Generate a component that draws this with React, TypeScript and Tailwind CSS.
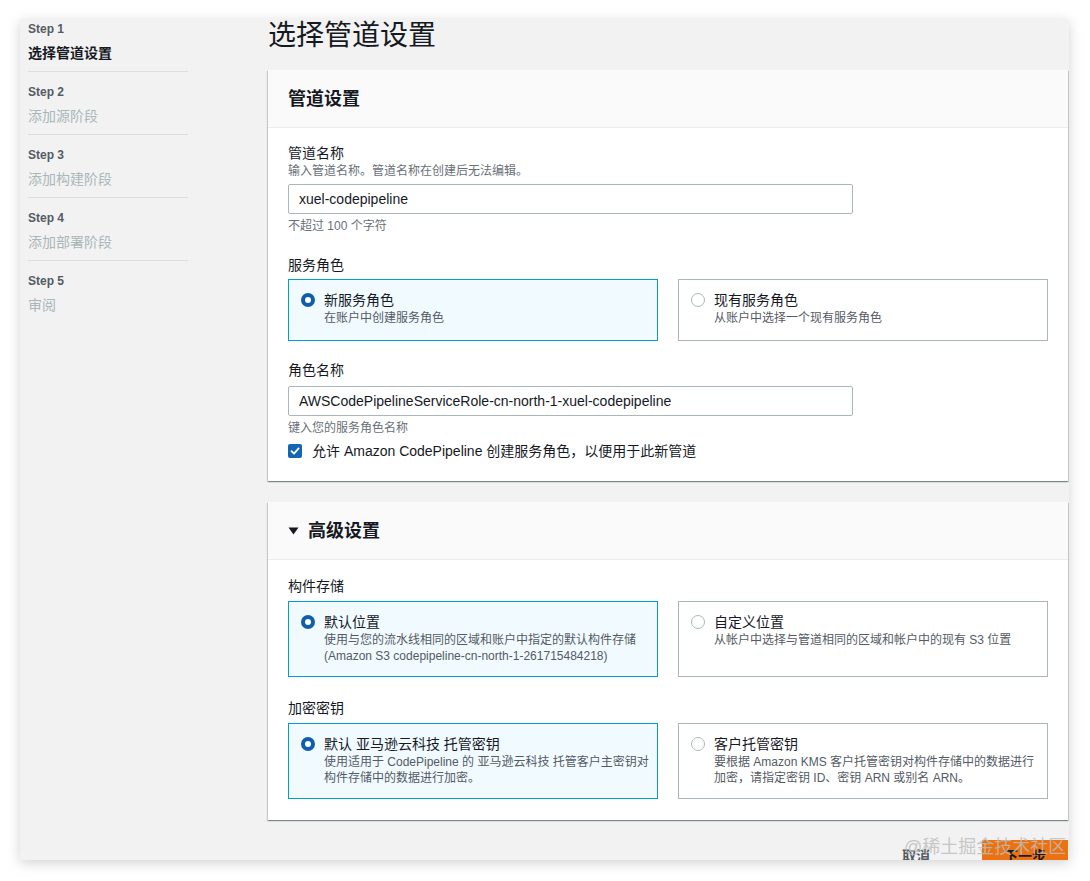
import React from "react";

const FONT = { fontFamily: '"Liberation Sans", "Noto Sans CJK SC", sans-serif' };

function Radio({ selected }: { selected: boolean }) {
  return selected ? (
    <div className="mt-[3px] w-[14px] h-[14px] shrink-0 rounded-full border-[4px] border-[#0f5ead] bg-white" />
  ) : (
    <div className="mt-[3px] w-[14px] h-[14px] shrink-0 rounded-full border border-[#aab7b8] bg-white" />
  );
}

function RadioCard({
  selected,
  title,
  lines,
}: {
  selected: boolean;
  title: string;
  lines: string[];
}) {
  const pad = lines.length > 1 ? "pb-[12px]" : "pb-[14px]";
  return (
    <div
      className={
        selected
          ? "flex px-[12px] pt-[10px] border border-[#00a1c9] bg-[#f1faff] " + pad
          : "flex px-[12px] pt-[10px] border border-[#aab7b8] bg-white " + pad
      }
    >
      <Radio selected={selected} />
      <div className="ml-[9px]">
        <div className="text-[14px] leading-[20px] text-[#16191f]">{title}</div>
        {lines.map((l, i) => (
          <div key={i} className="text-[12px] leading-[16px] text-[#545b64] whitespace-nowrap">
            {l}
          </div>
        ))}
      </div>
    </div>
  );
}

const steps = [
  { step: "Step 1", label: "选择管道设置", active: true },
  { step: "Step 2", label: "添加源阶段", active: false },
  { step: "Step 3", label: "添加构建阶段", active: false },
  { step: "Step 4", label: "添加部署阶段", active: false },
  { step: "Step 5", label: "审阅", active: false },
];

const cardShadow =
  "shadow-[0_1px_1px_0_rgba(0,28,36,0.3),1px_1px_1px_0_rgba(0,28,36,0.15),-1px_1px_1px_0_rgba(0,28,36,0.15)]";

export default function App() {
  return (
    <div className="relative min-h-[881px] bg-white pt-[19px] pl-[20px]" style={FONT}>
      <div className="w-[1049px] h-[841px] bg-[#f2f2f2] overflow-hidden flex shadow-[0_3px_12px_rgba(0,0,0,0.18)]">
        {/* Sidebar */}
        <div className="w-[248px] shrink-0 pl-[8px] pt-[2px]">
          <div className="w-[160px]">
            {steps.map((s, i) => (
              <div
                key={s.step}
                className={
                  (i < steps.length - 1 ? "border-b border-[#dcdede] pb-[8px] " : "") +
                  (i > 0 ? "pt-[12px]" : "")
                }
              >
                <div className="text-[12px] leading-[16px] font-bold text-[#545b64]">{s.step}</div>
                <div
                  className={
                    s.active
                      ? "mt-[6px] text-[14px] leading-[20px] font-bold text-[#16191f]"
                      : "mt-[6px] text-[14px] leading-[20px] text-[#aab7b8]"
                  }
                >
                  {s.label}
                </div>
              </div>
            ))}
          </div>
        </div>

        {/* Main */}
        <div className="flex-1 flex flex-col">
          <h1 className="text-[28px] leading-[34px] font-normal text-[#16191f]">选择管道设置</h1>

          {/* Card 1 */}
          <div className={"mt-[17px] w-[800px] bg-white shrink-0 " + cardShadow}>
            <div className="h-[58px] px-[20px] flex items-center bg-[#fafafa] border-b border-[#eaeded]">
              <h2 className="text-[18px] leading-[24px] font-bold text-[#16191f]">管道设置</h2>
            </div>
            <div className="pt-[15px] px-[20px] pb-[20px]">
              <div className="text-[14px] leading-[20px] text-[#16191f]">管道名称</div>
              <div className="text-[12px] leading-[16px] text-[#687078]">
                输入管道名称。管道名称在创建后无法编辑。
              </div>
              <div className="mt-[5px] w-[565px] h-[30px] border border-[#aab7b8] rounded-[2px] px-[10px] flex items-center text-[14px] text-[#16191f]">
                xuel-codepipeline
              </div>
              <div className="mt-[4px] text-[12px] leading-[16px] text-[#687078]">不超过 100 个字符</div>

              <div className="mt-[21px] text-[14px] leading-[20px] text-[#16191f]">服务角色</div>
              <div className="mt-[4px] grid grid-cols-[370px_370px] gap-[20px]">
                <RadioCard selected title="新服务角色" lines={["在账户中创建服务角色"]} />
                <RadioCard selected={false} title="现有服务角色" lines={["从账户中选择一个现有服务角色"]} />
              </div>

              <div className="mt-[19px] text-[14px] leading-[20px] text-[#16191f]">角色名称</div>
              <div className="mt-[6px] w-[565px] h-[30px] border border-[#aab7b8] rounded-[2px] px-[10px] flex items-center text-[14px] text-[#16191f]">
                AWSCodePipelineServiceRole-cn-north-1-xuel-codepipeline
              </div>
              <div className="mt-[4px] text-[12px] leading-[16px] text-[#687078]">键入您的服务角色名称</div>
              <div className="mt-[5px] flex items-center">
                <div className="w-[14px] h-[14px] rounded-[2px] bg-[#1466b3] flex items-center justify-center">
                  <svg width="10" height="10" viewBox="0 0 10 10">
                    <path d="M1.5 5.2 L4 7.6 L8.6 2.4" fill="none" stroke="white" strokeWidth="1.8" strokeLinecap="round" strokeLinejoin="round" />
                  </svg>
                </div>
                <div className="ml-[10px] text-[14px] leading-[20px] text-[#16191f]">
                  允许 Amazon CodePipeline 创建服务角色，以便用于此新管道
                </div>
              </div>
            </div>
          </div>

          {/* Card 2 */}
          <div className={"mt-[21px] w-[800px] bg-white shrink-0 " + cardShadow}>
            <div className="h-[58px] px-[20px] flex items-center bg-[#fafafa] border-b border-[#eaeded]">
              <svg width="11" height="8" viewBox="0 0 11 8" className="shrink-0">
                <polygon points="0.5,0.5 10.5,0.5 5.5,7.5" fill="#16191f" />
              </svg>
              <h2 className="ml-[9px] text-[18px] leading-[24px] font-bold text-[#16191f]">高级设置</h2>
            </div>
            <div className="pt-[16px] px-[20px] pb-[21px]">
              <div className="text-[14px] leading-[20px] text-[#16191f]">构件存储</div>
              <div className="mt-[5px] grid grid-cols-[370px_370px] gap-[20px]">
                <RadioCard
                  selected
                  title="默认位置"
                  lines={[
                    "使用与您的流水线相同的区域和账户中指定的默认构件存储",
                    "(Amazon S3 codepipeline-cn-north-1-261715484218)",
                  ]}
                />
                <RadioCard
                  selected={false}
                  title="自定义位置"
                  lines={["从帐户中选择与管道相同的区域和帐户中的现有 S3 位置"]}
                />
              </div>

              <div className="mt-[21px] text-[14px] leading-[20px] text-[#16191f]">加密密钥</div>
              <div className="mt-[5px] grid grid-cols-[370px_370px] gap-[20px]">
                <RadioCard
                  selected
                  title="默认 亚马逊云科技 托管密钥"
                  lines={["使用适用于 CodePipeline 的 亚马逊云科技 托管客户主密钥对", "构件存储中的数据进行加密。"]}
                />
                <RadioCard
                  selected={false}
                  title="客户托管密钥"
                  lines={["要根据 Amazon KMS 客户托管密钥对构件存储中的数据进行", "加密，请指定密钥 ID、密钥 ARN 或别名 ARN。"]}
                />
              </div>
            </div>
          </div>

          {/* Footer */}
          <div className="mt-[20px] w-[800px] flex justify-end items-center shrink-0">
            <span className="text-[14px] leading-[20px] font-bold text-[#545b64] mr-[52px]">取消</span>
            <div className="h-[32px] w-[86px] bg-[#ec7211] flex items-center justify-center text-[14px] font-bold text-[#16191f]">
              下一步
            </div>
          </div>
        </div>
      </div>

      {/* Watermark */}
      <div className="absolute left-[904px] top-[835px] text-[18px] leading-[24px] text-[#bdbdbd] opacity-80 whitespace-nowrap pointer-events-none">
        @稀土掘金技术社区
      </div>
    </div>
  );
}
